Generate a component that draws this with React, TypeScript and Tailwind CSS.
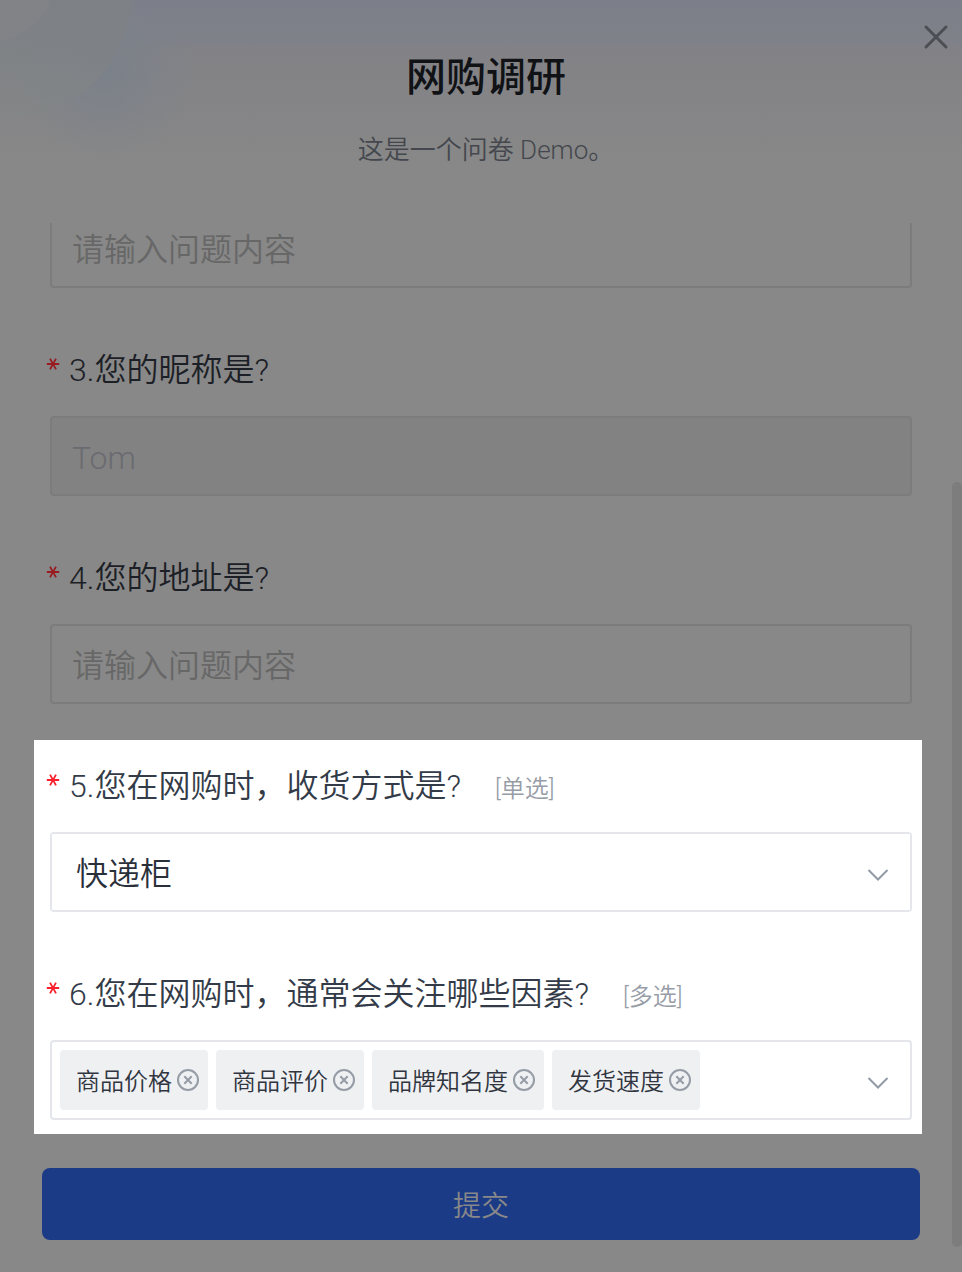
import { useState } from 'react'

const FACTORS = ['商品价格', '商品评价', '品牌知名度', '发货速度']

interface LabelProps {
  htmlFor: string
  text: string
  hint?: string
  lit?: boolean
}

function QuestionLabel({ htmlFor, text, hint, lit }: LabelProps) {
  return (
    <label htmlFor={htmlFor} className="-ml-1 mb-6 flex h-12 items-center">
      <svg
        viewBox="0 0 14 14"
        className={`mb-[9px] mr-[9px] size-[14px] ${lit ? 'text-[#f8202c]' : 'text-[#981c22]'}`}
        fill="none"
        stroke="currentColor"
        strokeWidth="1.8"
      >
        <path d="M.8 7h12.4M4 1.6l6 10.8M10 1.6 4 12.4" />
      </svg>
      <span className={`pt-1 text-[32px] ${lit ? 'text-[#333b48]' : 'text-[#1c2026]'}`}>{text}</span>
      {hint && <span className="ml-[34px] pt-2.5 text-2xl text-[#979da7]">{hint}</span>}
    </label>
  )
}

function ChevronIcon() {
  return (
    <svg
      viewBox="0 0 24 24"
      className="pointer-events-none absolute right-5 top-1/2 -mt-2 size-6"
      fill="none"
      stroke="#929aa5"
      strokeWidth="2"
    >
      <path d="M2.5 6 12 15.5 21.5 6" />
    </svg>
  )
}

function RemoveIcon() {
  return (
    <svg viewBox="0 0 24 24" className="size-6" fill="none" stroke="#949ca6" strokeWidth="2">
      <circle cx="12" cy="12" r="10" />
      <path d="m8.3 8.3 7.4 7.4M15.7 8.3l-7.4 7.4" />
    </svg>
  )
}

export default function App() {
  const [factors, setFactors] = useState(FACTORS)
  const [delivery, setDelivery] = useState('快递柜')

  return (
    <main className="relative flex min-h-screen flex-col overflow-hidden bg-[#888888] bg-[linear-gradient(to_bottom,#7c7f89_0px,#7f8189_40px,#828286_50px,#858587_110px,#888888_168px)] pb-8 font-['Roboto','Noto_Sans_CJK_SC',sans-serif] font-[350]">
      {/* Soft discs in the corner */}
      <svg className="pointer-events-none absolute left-0 top-0 h-[168px] w-[220px]" viewBox="0 0 220 168" fill="none">
        <defs>
          <radialGradient id="glow" cx="105" cy="68" r="90" gradientUnits="userSpaceOnUse">
            <stop stopColor="#7b818a" />
            <stop offset="0.4" stopColor="#7b818a" stopOpacity="0.6" />
            <stop offset="1" stopColor="#7b818a" stopOpacity="0" />
          </radialGradient>
          <linearGradient id="disc" x1="0" y1="40" x2="0" y2="120" gradientUnits="userSpaceOnUse">
            <stop stopColor="#7e8285" />
            <stop offset="1" stopColor="#838687" />
          </linearGradient>
        </defs>
        <circle cx="105" cy="68" r="90" fill="url(#glow)" />
        <circle cx="5" cy="-8" r="127" fill="url(#disc)" opacity="0.75" />
        <circle cx="-12" cy="-26" r="68" fill="#838386" opacity="0.7" />
      </svg>

      <header className="relative flex h-[223px] shrink-0 flex-col items-center pt-12">
        <h1 className="pl-[10px] text-[40px] font-medium leading-[60px] text-[#101216]">网购调研</h1>
        <p className="mt-6 pl-[10px] text-[26px] leading-[36px] text-[#44474d]">这是一个问卷 Demo。</p>
        <button type="button" aria-label="关闭" className="absolute right-3 top-[23px] size-7">
          <svg viewBox="0 0 28 28" fill="none" stroke="#4b4e53" strokeWidth="3">
            <path d="m4 4 20 20M24 4 4 24" strokeLinecap="round" />
          </svg>
        </button>
      </header>

      <form className="relative flex flex-col" onSubmit={(e) => e.preventDefault()}>
        <div className="overflow-hidden px-[50px]">
          <input
            aria-label="问题内容"
            placeholder="请输入问题内容"
            className="-mt-[15px] block h-20 w-full rounded border-2 border-[#7c7c7c] bg-transparent px-5 pt-1 text-[32px] placeholder:text-[#676767]"
          />
        </div>

        <div className="px-[50px] pt-14">
          <QuestionLabel htmlFor="nickname" text="3.您的昵称是?" />
          <input
            id="nickname"
            disabled
            value="Tom"
            className="block h-20 w-full rounded border-2 border-[#7c7c7c] bg-[#828282] px-5 pt-1 text-[32px] text-[#6a6b70]"
          />
        </div>

        <div className="px-[50px] pt-14">
          <QuestionLabel htmlFor="address" text="4.您的地址是?" />
          <input
            id="address"
            placeholder="请输入问题内容"
            className="block h-20 w-full rounded border-2 border-[#7c7c7c] bg-transparent px-5 pt-1 text-[32px] placeholder:text-[#676767]"
          />
        </div>

        {/* Highlighted questions */}
        <section className="ml-[34px] mr-10 mt-9 bg-white pb-[14px] pl-4 pr-[10px] pt-5">
          <QuestionLabel lit htmlFor="delivery" text="5.您在网购时，收货方式是?" hint="[单选]" />
          <div className="relative h-20 rounded border-2 border-[#e5e6eb]">
            <select
              id="delivery"
              value={delivery}
              onChange={(e) => setDelivery(e.target.value)}
              className="block size-full appearance-none bg-white px-6 pt-1 text-[32px] text-[#2a303a]"
            >
              <option>快递柜</option>
            </select>
            <ChevronIcon />
          </div>

          <div className="pt-14">
            <QuestionLabel lit htmlFor="factors" text="6.您在网购时，通常会关注哪些因素?" hint="[多选]" />
            <div className="relative flex h-20 items-center gap-2 rounded border-2 border-[#e5e6eb] px-2">
              {factors.map((name) => (
                <span key={name} className="flex h-[60px] items-center gap-1 rounded bg-[#eff0f2] pl-4 pr-2 text-2xl text-[#30353f]">
                  <span className="pt-1">{name}</span>
                  <button type="button" aria-label={`移除${name}`} onClick={() => setFactors(factors.filter((f) => f !== name))}>
                    <RemoveIcon />
                  </button>
                </span>
              ))}
              <input id="factors" className="h-full min-w-0 flex-1 bg-transparent text-2xl outline-none" />
              <ChevronIcon />
            </div>
          </div>
        </section>

        <button type="submit" className="mx-[42px] mt-[34px] h-[72px] rounded-lg bg-[#1c3b87] pt-1.5 text-[28px] text-[#888888]">
          提交
        </button>
      </form>

      {/* Scroll thumb */}
      <div className="absolute bottom-[25px] right-0 top-[482px] w-[10px] rounded-full bg-[#7d7d7d]" />
    </main>
  )
}
